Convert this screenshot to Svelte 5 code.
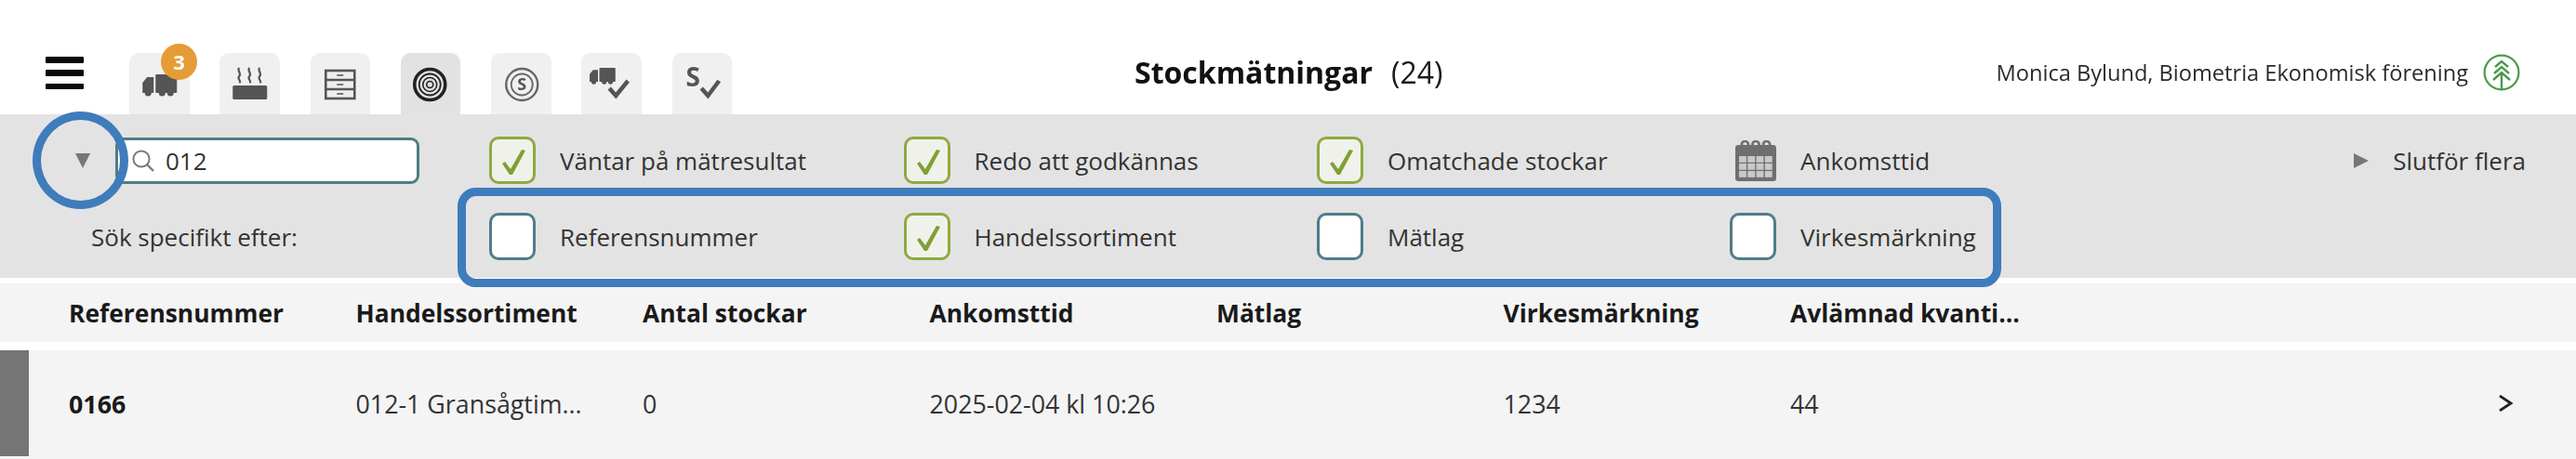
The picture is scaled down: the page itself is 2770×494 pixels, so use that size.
<script>
  const tabs = ['truck', 'kiln', 'drawers', 'rings', 'coin', 'truckcheck', 'scheck'];
  const columns = ['Referensnummer', 'Handelssortiment', 'Antal stockar', 'Ankomsttid', 'Mätlag', 'Virkesmärkning', 'Avlämnad kvanti...'];
  const row = ['0166', '012-1 Gransågtim...', '0', '2025-02-04 kl 10:26', '', '1234', '44'];
  const statusFilters = [
    { label: 'Väntar på mätresultat', checked: true },
    { label: 'Redo att godkännas', checked: true },
    { label: 'Omatchade stockar', checked: true }
  ];
  const searchFilters = [
    { label: 'Referensnummer', checked: false },
    { label: 'Handelssortiment', checked: true },
    { label: 'Mätlag', checked: false },
    { label: 'Virkesmärkning', checked: false }
  ];
</script>

{#snippet check(checked)}
  <span class="box" class:checked>
    {#if checked}
      <svg viewBox="0 0 50 51" aria-hidden="true"><path d="M14 29 L17 27 L23 35 L35 14 L39 15 L25 41 L22 41 Z" fill="#7fa033"/></svg>
    {/if}
  </span>
{/snippet}

{#snippet truck(x, y, s)}
  <g transform="translate({x} {y}) scale({s})" fill="#555">
    <path d="M1 9 L6 3 H13 V20 H1 Z"/>
    <rect x="15" y="0" width="23" height="20" rx="1"/>
    <circle cx="7" cy="20" r="3.5"/><circle cx="22" cy="20" r="3.5"/><circle cx="31" cy="20" r="3.5"/>
  </g>
{/snippet}

<div class="page">
  <header class="top">
    <button class="burger" aria-label="Meny"><i></i><i></i><i></i></button>
    <nav class="tabs">
      {#each tabs as t}
        <div class="tab" class:active={t === 'rings'}>
          <svg viewBox="0 0 64 66" aria-hidden="true">
            {#if t === 'truck'}
              {@render truck(13, 23, 1)}
            {:else if t === 'kiln'}
              <g fill="none" stroke="#555" stroke-width="2.2">
                <path d="M21 16 c-3 3 3 6 0 9 c-3 3 3 5 0 7"/>
                <path d="M32 16 c-3 3 3 6 0 9 c-3 3 3 5 0 7"/>
                <path d="M43 16 c-3 3 3 6 0 9 c-3 3 3 5 0 7"/>
              </g>
              <rect x="14" y="35" width="37" height="15" rx="1.5" fill="#555"/>
            {:else if t === 'drawers'}
              <g fill="#eee" stroke="#555" stroke-width="2.6">
                <rect x="16" y="19" width="31" height="30"/>
                <path d="M16 29 H47 M16 39 H47"/>
              </g>
              <path d="M28 24 H35 M28 34 H35 M28 44 H35" stroke="#777" stroke-width="2"/>
            {:else if t === 'rings'}
              <g fill="none" stroke="#222">
                <circle cx="31" cy="34" r="16.5" stroke-width="3.6"/>
                <circle cx="31" cy="34" r="11.5" stroke-width="1.8"/>
                <circle cx="31" cy="34" r="7.5" stroke-width="1.6"/>
                <circle cx="31" cy="34" r="3.5" stroke-width="1.6"/>
              </g>
            {:else if t === 'coin'}
              <g fill="none" stroke="#666">
                <circle cx="33" cy="34" r="17" stroke-width="2.4"/>
                <circle cx="33" cy="34" r="11.5" stroke-width="1.8"/>
              </g>
              <text x="33" y="40" class="glyph small">S</text>
            {:else if t === 'truckcheck'}
              {@render truck(8, 16, 0.75)}
              <path d="M30 38 L37 46 L50 30" fill="none" stroke="#555" stroke-width="4.5"/>
            {:else}
              <text x="22" y="36" class="glyph">S</text>
              <path d="M31 38 L38 46 L50 30" fill="none" stroke="#555" stroke-width="4.5"/>
            {/if}
          </svg>
          {#if t === 'truck'}<span class="badge">3</span>{/if}
        </div>
      {/each}
    </nav>
    <h1><b>Stockmätningar</b><span>(24)</span></h1>
    <div class="user">
      <span>Monica Bylund, Biometria Ekonomisk förening</span>
      <svg class="logo" viewBox="0 0 40 40" aria-hidden="true">
        <g fill="none" stroke="#4a9a4c">
          <circle cx="20" cy="20" r="18.4" stroke-width="2.2"/>
          <path d="M13 14 L20 8 L27 14 M12 21 L20 14 L28 21 M11 28 L20 20 L29 28 M20 20 V38" stroke-width="2.4"/>
        </g>
      </svg>
    </div>
  </header>

  <section class="filters">
    <div class="search-cell">
      <span class="down"></span>
      <div class="search">
        <svg viewBox="0 0 24 24" aria-hidden="true"><circle cx="10" cy="10" r="8.6" fill="none" stroke="#7b7b7b" stroke-width="2"/><path d="M16 16 L23 23" stroke="#7b7b7b" stroke-width="2.4"/></svg>
        <span>012</span>
      </div>
    </div>
    {#each statusFilters as f}
      <label class="filter">{@render check(f.checked)}<span>{f.label}</span></label>
    {/each}
    <div class="filter date">
      <svg viewBox="3 0 38 44" preserveAspectRatio="none" aria-hidden="true">
        <path d="M3 8 Q3 5 6 5 H38 Q41 5 41 8 V41 Q41 44 38 44 H6 Q3 44 3 41 Z" fill="#6f6f6f"/>
        <g fill="none" stroke="#6f6f6f" stroke-width="2.4">
          <path d="M9 9 V4 a3 3 0 0 1 6 0 V9 M19 9 V4 a3 3 0 0 1 6 0 V9 M29 9 V4 a3 3 0 0 1 6 0 V9"/>
        </g>
        <g fill="#c9c9c9">
          {#each [0, 1, 2] as r}
            {#each [0, 1, 2, 3] as c}
              <rect x={6.5 + c * 8} y={17 + r * 8} width="6.8" height="6.8"/>
            {/each}
          {/each}
        </g>
      </svg>
      <span>Ankomsttid</span>
    </div>
    <div class="finish"><span class="right"></span><span>Slutför flera</span></div>

    <div class="search-label">Sök specifikt efter:</div>
    {#each searchFilters as f}
      <label class="filter">{@render check(f.checked)}<span>{f.label}</span></label>
    {/each}
    <div></div>

    <div class="mark-circle"></div>
    <div class="mark-box"></div>
  </section>

  <div class="thead">
    {#each columns as c}<div>{c}</div>{/each}
  </div>

  <div class="trow">
    <span class="status"></span>
    <div class="cells">
      {#each row as c, i}<div class:strong={i === 0}>{c}</div>{/each}
    </div>
    <svg class="chev" viewBox="0 0 18 18" aria-hidden="true"><path d="M3 1 L15 9 L3 17" fill="none" stroke="#222" stroke-width="2.8"/></svg>
  </div>
</div>

<style>
  :global(body) { margin: 0; background: #fff; }
  .page {
    width: 2770px;
    height: 494px;
    overflow: hidden;
    font-family: "Open Sans", "Noto Sans", sans-serif;
    font-size: 26px;
    color: #333;
    filter: blur(0.6px);
  }
  .top { height: 123px; display: flex; align-items: flex-end; position: relative; }
  .burger {
    align-self: flex-start;
    margin: 61px 0 0 49px;
    padding: 0;
    width: 41px;
    height: 35px;
    border: 0;
    background: none;
    display: flex;
    flex-direction: column;
    justify-content: space-between;
  }
  .burger i { display: block; height: 6.5px; background: #0a0a0a; border-radius: 1px; }
  .tabs { display: flex; gap: 32.8px; margin-left: 49px; }
  .tab {
    width: 64.5px;
    height: 66px;
    background: #f0f0f0;
    border-radius: 10px 10px 0 0;
    position: relative;
  }
  .tab.active { background: #e2e2e2; }
  .tab svg { display: block; width: 100%; height: 100%; }
  .glyph { font: 700 28px "Open Sans", sans-serif; fill: #555; text-anchor: middle; }
  .glyph.small { font-size: 18px; }
  .badge {
    position: absolute;
    left: 34px;
    top: -10px;
    width: 39px;
    height: 39px;
    border-radius: 50%;
    background: #e59c36;
    color: #fff;
    font-weight: 700;
    font-size: 22px;
    line-height: 39px;
    text-align: center;
  }
  h1 {
    position: absolute;
    left: 1220px;
    top: 55px;
    margin: 0;
    font-size: 32px;
    line-height: 46px;
    font-weight: 400;
    color: #1c1c1c;
    display: flex;
    gap: 20px;
    white-space: nowrap;
  }
  h1 b { color: #111; }
  .user {
    position: absolute;
    right: 60px;
    top: 58px;
    height: 40px;
    display: flex;
    align-items: center;
    gap: 16px;
    font-size: 23.6px;
    color: #2b2b2b;
    white-space: nowrap;
  }
  .logo { width: 40px; height: 40px; display: block; }

  .filters {
    position: relative;
    height: 176px;
    box-sizing: border-box;
    padding-top: 24px;
    background: #e3e3e3;
    display: grid;
    grid-template-columns: 526px 445.5px 444.5px 444px 430px 1fr;
    grid-template-rows: 51px 51px;
    row-gap: 31px;
    align-items: center;
  }
  .search-cell { display: flex; align-items: center; height: 51px; }
  .down {
    width: 0; height: 0;
    margin-left: 81px;
    border: 8.5px solid transparent;
    border-top: 16px solid #777;
    border-bottom: 0;
  }
  .search {
    margin-left: 27px;
    width: 327px;
    height: 50px;
    box-sizing: border-box;
    border: 3px solid #4f7c86;
    border-radius: 9px;
    background: #fff;
    display: flex;
    align-items: center;
    padding-left: 15px;
    gap: 12px;
  }
  .search svg { width: 24px; height: 24px; display: block; }
  .filter { display: flex; align-items: center; gap: 26px; white-space: nowrap; }
  .box {
    width: 50px;
    height: 51px;
    box-sizing: border-box;
    border: 3px solid #4f7c8a;
    border-radius: 10px;
    background: #fff;
    display: block;
    position: relative;
    flex: none;
  }
  .box.checked { border-color: #8dab3f; background: #f1f1ec; }
  .box svg { position: absolute; left: -3px; top: -3px; width: 50px; height: 51px; }
  .date { padding-left: 6px; gap: 26px; }
  .date svg { width: 44px; height: 44px; display: block; flex: none; }
  .finish {
    display: flex;
    align-items: center;
    justify-content: flex-end;
    padding-right: 54px;
    gap: 26px;
    white-space: nowrap;
  }
  .right {
    width: 0; height: 0;
    border: 8.5px solid transparent;
    border-left: 16px solid #777;
    border-right: 0;
  }
  .search-label { padding-left: 98px; white-space: nowrap; }
  .mark-circle {
    position: absolute;
    left: 35px;
    top: -3px;
    width: 103px;
    height: 105px;
    box-sizing: border-box;
    border: 9px solid #3f7cbb;
    border-radius: 50%;
  }
  .mark-box {
    position: absolute;
    left: 492px;
    top: 79px;
    width: 1660px;
    height: 107px;
    box-sizing: border-box;
    border: 9px solid #3f7cbb;
    border-radius: 20px;
    z-index: 2;
  }
  .thead {
    margin-top: 6px;
    height: 63px;
    background: #f4f4f4;
    padding-left: 74px;
    display: grid;
    grid-template-columns: repeat(7, 308.5px);
    align-items: center;
    font-weight: 700;
    font-size: 26.4px;
    color: #1a1a1a;
  }
  .trow {
    margin-top: 9px;
    height: 117px;
    background: #f4f4f4;
    display: flex;
    align-items: center;
    position: relative;
    font-size: 26.8px;
  }
  .status { width: 31px; height: 114px; align-self: flex-start; background: #757575; }
  .cells {
    margin-left: 43px;
    display: grid;
    grid-template-columns: repeat(7, 308.5px);
    margin-top: -3px;
    white-space: nowrap;
  }
  .strong { font-weight: 700; color: #1a1a1a; }
  .chev { position: absolute; left: 2685px; top: 48px; width: 18px; height: 18px; }
</style>
